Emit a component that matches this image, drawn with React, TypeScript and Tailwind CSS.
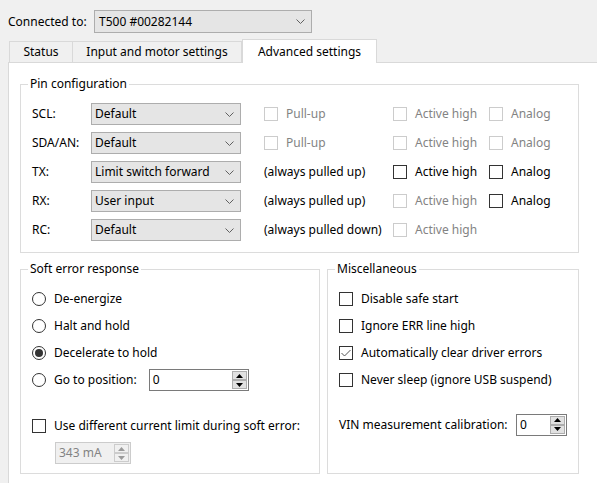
import React from 'react';

const Chevron: React.FC = () => (
  <svg width="9" height="5" viewBox="0 0 9 5" className="shrink-0">
    <path d="M0.5 0.5 L4.5 4.5 L8.5 0.5" fill="none" stroke="#606060" strokeWidth="1" />
  </svg>
);

const Combo: React.FC<{ value: string; wide?: boolean }> = ({ value, wide }) => (
  <div
    className={
      wide
        ? 'flex items-center justify-between h-[23px] w-[218px] border border-[#adadad] bg-[#e5e5e5] pl-[4px] pr-[6px]'
        : 'flex items-center justify-between h-[22px] w-[150px] border border-[#adadad] bg-[#e5e5e5] pl-[3px] pr-[6px]'
    }
  >
    <span className="whitespace-nowrap">{value}</span>
    <Chevron />
  </div>
);

const Check: React.FC<{ label: string; checked?: boolean; disabled?: boolean }> = ({ label, checked, disabled }) => (
  <div className="flex items-center gap-[8px] whitespace-nowrap">
    <span
      className={
        disabled
          ? 'w-[14px] h-[14px] shrink-0 border border-[#cccccc] bg-white'
          : 'w-[14px] h-[14px] shrink-0 border border-[#333333] bg-white flex items-center justify-center'
      }
    >
      {checked && (
        <svg width="10" height="8" viewBox="0 0 10 8">
          <path d="M0.5 4 L3.5 7 L9.5 1" fill="none" stroke="#555555" strokeWidth="1" />
        </svg>
      )}
    </span>
    <span className={disabled ? 'text-[#838383]' : 'text-black'}>{label}</span>
  </div>
);

const Radio: React.FC<{ label: string; checked?: boolean }> = ({ label, checked }) => (
  <div className="flex items-center gap-[8px] whitespace-nowrap">
    <span className="w-[14px] h-[14px] shrink-0 rounded-full border border-[#333333] bg-white flex items-center justify-center">
      {checked && <span className="w-[8px] h-[8px] rounded-full bg-[#333333]" />}
    </span>
    <span>{label}</span>
  </div>
);

const Arrow: React.FC<{ up?: boolean; disabled?: boolean }> = ({ up, disabled }) => (
  <span
    className={
      disabled
        ? 'flex-1 flex items-center justify-center border border-[#cccccc] bg-[#f0f0f0]'
        : 'flex-1 flex items-center justify-center border border-[#adadad] bg-[#e1e1e1]'
    }
  >
    <svg width="7" height="4" viewBox="0 0 7 4">
      <path d={up ? 'M0 4 L3.5 0 L7 4 Z' : 'M0 0 L3.5 4 L7 0 Z'} fill={disabled ? '#9a9a9a' : '#000000'} />
    </svg>
  </span>
);

const Spin: React.FC<{ value: string; w: string; disabled?: boolean }> = ({ value, w, disabled }) => (
  <div
    className={
      (disabled
        ? 'border-[#cccccc] bg-[#f0f0f0] text-[#838383] '
        : 'border-[#7a7a7a] bg-white text-black ') +
      'flex items-center h-[22px] border pl-[3px] pr-[1px] ' +
      w
    }
  >
    <span className="flex-1">{value}</span>
    <div className="flex flex-col w-[15px] h-[18px]">
      <Arrow up disabled={disabled} />
      <Arrow disabled={disabled} />
    </div>
  </div>
);

const Group: React.FC<{ title: string; className?: string; children: React.ReactNode }> = ({ title, className, children }) => (
  <fieldset className={'border border-[#dcdcdc] ' + (className ?? '')}>
    <legend className="ml-[7px] px-[2px] leading-[16px]">{title}</legend>
    {children}
  </fieldset>
);

const pins = [
  { name: 'SCL:', value: 'Default', pull: 'Pull-up', pullBox: true, active: false, analog: false, hasAnalog: true },
  { name: 'SDA/AN:', value: 'Default', pull: 'Pull-up', pullBox: true, active: false, analog: false, hasAnalog: true },
  { name: 'TX:', value: 'Limit switch forward', pull: '(always pulled up)', pullBox: false, active: true, analog: true, hasAnalog: true },
  { name: 'RX:', value: 'User input', pull: '(always pulled up)', pullBox: false, active: false, analog: true, hasAnalog: true },
  { name: 'RC:', value: 'Default', pull: '(always pulled down)', pullBox: false, active: false, analog: false, hasAnalog: false },
];

const App: React.FC = () => {
  return (
    <div className="w-[597px] h-[483px] overflow-hidden bg-[#f0f0f0] text-[12px] leading-[16px] text-black [font-family:'Noto_Sans','DejaVu_Sans',sans-serif]">
      {/* Connected to */}
      <div className="flex items-center pt-[10px] pl-[8px]">
        <span className="w-[86px] whitespace-nowrap">Connected to:</span>
        <Combo value="T500 #00282144" wide />
      </div>

      {/* Tabs */}
      <div className="flex items-end mt-[6px] pl-[9px] h-[23px]">
        <div className="h-[21px] w-[64px] flex items-center justify-center border border-b-0 border-[#d9d9d9] bg-[#f0f0f0]">Status</div>
        <div className="h-[21px] w-[169px] flex items-center justify-center border border-b-0 border-l-0 border-[#d9d9d9] bg-[#f0f0f0]">
          Input and motor settings
        </div>
        <div className="relative z-10 -mb-px h-[24px] w-[135px] flex items-center justify-center border border-b-0 border-[#d9d9d9] bg-white">
          Advanced settings
        </div>
      </div>

      {/* Tab pane */}
      <div className="ml-[8px] w-[620px] h-[500px] border border-[#d9d9d9] bg-white pl-[11px] pt-[13px]">
        <Group title="Pin configuration" className="w-[559px]">
          <div className="flex flex-col gap-[7px] pt-[11px] pb-[11px] px-[11px]">
            {pins.map((p) => (
              <div key={p.name} className="flex items-center h-[22px]">
                <span className="w-[59px]">{p.name}</span>
                <Combo value={p.value} />
                <div className="w-[129px] ml-[23px]">
                  {p.pullBox ? <Check label={p.pull} disabled /> : <span className="whitespace-nowrap">{p.pull}</span>}
                </div>
                <div className="w-[96px]">
                  <Check label="Active high" disabled={!p.active} />
                </div>
                {p.hasAnalog && <Check label="Analog" disabled={!p.analog} />}
              </div>
            ))}
          </div>
        </Group>

        <div className="flex gap-[7px] mt-[8px] h-[213px]">
          <Group title="Soft error response" className="w-[300px]">
            <div className="flex flex-col px-[11px] pt-[11px]">
              <div className="flex flex-col gap-[6px]">
                <div className="h-[21px] flex items-center"><Radio label="De-energize" /></div>
                <div className="h-[21px] flex items-center"><Radio label="Halt and hold" /></div>
                <div className="h-[21px] flex items-center"><Radio label="Decelerate to hold" checked /></div>
                <div className="h-[22px] flex items-center">
                  <Radio label="Go to position:" />
                  <div className="ml-[12px]">
                    <Spin value="0" w="w-[100px]" />
                  </div>
                </div>
              </div>
              <div className="h-[21px] flex items-center mt-[24px]">
                <Check label="Use different current limit during soft error:" />
              </div>
              <div className="mt-[6px] pl-[23px]">
                <Spin value="343 mA" w="w-[76px]" disabled />
              </div>
            </div>
          </Group>

          <Group title="Miscellaneous" className="w-[252px]">
            <div className="flex flex-col px-[11px] pt-[11px]">
              <div className="flex flex-col gap-[6px]">
                <div className="h-[21px] flex items-center"><Check label="Disable safe start" /></div>
                <div className="h-[21px] flex items-center"><Check label="Ignore ERR line high" /></div>
                <div className="h-[21px] flex items-center"><Check label="Automatically clear driver errors" checked /></div>
                <div className="h-[22px] flex items-center"><Check label="Never sleep (ignore USB suspend)" /></div>
              </div>
              <div className="h-[21px] flex items-center mt-[23px]">
                <span className="whitespace-nowrap">VIN measurement calibration:</span>
                <div className="ml-auto">
                  <Spin value="0" w="w-[51px]" />
                </div>
              </div>
            </div>
          </Group>
        </div>
      </div>
    </div>
  );
};

export default App;
